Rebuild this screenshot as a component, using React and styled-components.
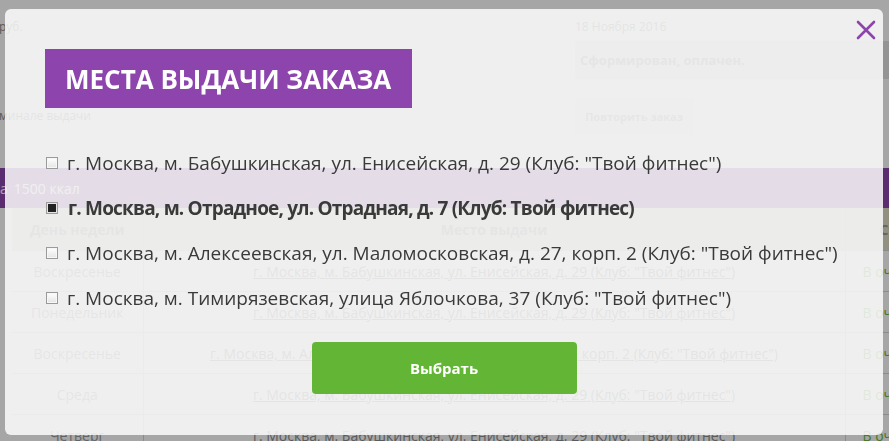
import React, { useState } from "react";
import styled, { createGlobalStyle } from "styled-components";

const GlobalStyle = createGlobalStyle`
  html, body {
    margin: 0;
    padding: 0;
    background: #ffffff;
    overflow: hidden;
  }
  body {
    font-family: "Open Sans", "Liberation Sans", sans-serif;
  }
`;

/* ---------- page behind the modal ---------- */

const Page = styled.div`
  width: 889px;
  height: 441px;
  overflow: hidden;
  color: #8a8a8a;
  font-size: 12px;
`;

const TopArea = styled.div`
  display: grid;
  grid-template-columns: 575px 330px;
  padding-top: 18px;
`;

const LeftInfo = styled.div`
  display: flex;
  flex-direction: column;
  gap: 71px;
  margin-left: -1px;
  line-height: 18px;
`;

const RightInfo = styled.div`
  display: flex;
  flex-direction: column;
`;

const DateLine = styled.div`
  line-height: 18px;
  height: 23px;
`;

const StatusBox = styled.div`
  height: 38px;
  background: #e4e4e4;
  display: flex;
  align-items: center;
  padding-left: 5px;
  font-weight: 700;
  font-size: 13px;
  color: #9a9a9a;
`;

const RepeatButton = styled.div`
  margin-top: 19px;
  width: 118px;
  height: 37px;
  background: #f2f2f2;
  display: flex;
  align-items: center;
  justify-content: center;
  font-weight: 700;
  font-size: 11px;
  color: #a3a3a3;
`;

const Band = styled.div`
  margin-top: 33px;
  height: 40px;
  background: #8e44ad;
  color: #ffffff;
  display: flex;
  align-items: center;
  gap: 6px;
  font-size: 14px;
`;

const Table = styled.table`
  margin-left: 12px;
  border-collapse: collapse;
  width: 1000px;
  table-layout: fixed;
`;

const Th = styled.th`
  height: 42px;
  padding: 0;
  background: #e0dfc6;
  color: #9a9a9a;
  font-weight: 700;
  font-size: 14px;
  text-align: ${(p) => (p.$left ? "left" : "center")};
  padding-left: ${(p) => (p.$left ? "34px" : "0")};
  border-left: 1px solid #d8d8d8;
  &:first-child { border-left: none; }
`;

const Td = styled.td`
  height: 40px;
  padding: 0;
  text-align: ${(p) => (p.$left ? "left" : "center")};
  padding-left: ${(p) => (p.$left ? "17px" : "0")};
  font-size: 14px;
  color: ${(p) => (p.$green ? "#6ab83c" : "#9a9a9a")};
  border-top: 1px solid #d6d6d6;
  border-left: 1px solid #d6d6d6;
  white-space: nowrap;
  overflow: hidden;
  &:first-child { border-left: none; }
`;

const PlaceLink = styled.span`
  text-decoration: underline;
  color: #8c8c8c;
`;

/* ---------- overlay + modal ---------- */

const Backdrop = styled.div`
  position: fixed;
  inset: 0;
  background: rgba(0, 0, 0, 0.35);
`;

const Modal = styled.div`
  position: fixed;
  left: 5px;
  top: 9px;
  width: 878px;
  height: 426px;
  box-sizing: border-box;
  padding: 40px;
  border-radius: 6px;
  background: rgba(251, 251, 251, 0.85);
  display: flex;
  flex-direction: column;
`;

const CloseButton = styled.button`
  position: absolute;
  top: 11px;
  right: 7px;
  width: 20px;
  height: 20px;
  padding: 0;
  border: none;
  background: transparent;
  cursor: pointer;
  display: flex;
  align-items: center;
  justify-content: center;
`;

const Title = styled.h2`
  align-self: flex-start;
  margin: 0;
  height: 59px;
  padding: 0 21px 0 20px;
  display: flex;
  align-items: center;
  background: #8e44ad;
  color: #ffffff;
  font-size: 26px;
  font-weight: 700;
  text-transform: uppercase;
`;

const OptionList = styled.div`
  margin-top: 32px;
  display: flex;
  flex-direction: column;
`;

const Option = styled.label`
  height: 45px;
  display: flex;
  align-items: center;
  gap: 9px;
  font-size: 19px;
  color: #3a3a3a;
  font-weight: ${(p) => (p.$active ? 700 : 400)};
  letter-spacing: ${(p) => (p.$active ? "-0.8px" : "0")};
  cursor: pointer;
  white-space: nowrap;
`;

const Box = styled.span`
  width: 12px;
  height: 12px;
  flex: none;
  margin-left: 1px;
  margin-right: ${(p) => (p.$checked ? "1px" : "0")};
  box-sizing: border-box;
  border: 1px solid #9a9a9a;
  background: ${(p) => (p.$checked ? "#222222" : "linear-gradient(#ffffff, #e4e4e4)")};
  box-shadow: ${(p) => (p.$checked ? "inset 0 0 0 1px #e5e5e5" : "inset 0 0 0 1px #f7f7f7")};
`;

const SubmitButton = styled.button`
  align-self: center;
  margin-top: 22px;
  width: 265px;
  height: 52px;
  border: none;
  border-radius: 4px;
  background: #63b536;
  color: #ffffff;
  font-family: "Open Sans", "Liberation Sans", sans-serif;
  font-size: 15px;
  font-weight: 700;
  cursor: pointer;
`;

const places = [
  'г. Москва, м. Бабушкинская, ул. Енисейская, д. 29 (Клуб: "Твой фитнес")',
  "г. Москва, м. Отрадное, ул. Отрадная, д. 7 (Клуб: Твой фитнес)",
  'г. Москва, м. Алексеевская, ул. Маломосковская, д. 27, корп. 2 (Клуб: "Твой фитнес")',
  'г. Москва, м. Тимирязевская, улица Яблочкова, 37 (Клуб: "Твой фитнес")',
];

const rows = [
  ["Воскресенье", places[0]],
  ["Понедельник", places[0]],
  ["Воскресенье", places[2]],
  ["Среда", places[0]],
  ["Четверг", places[0]],
];

export default function App() {
  const [selected, setSelected] = useState(1);

  return (
    <>
      <GlobalStyle />
      <Page>
        <TopArea>
          <LeftInfo>
            <span>руб.</span>
            <span>минале выдачи</span>
          </LeftInfo>
          <RightInfo>
            <DateLine>18 Ноября 2016</DateLine>
            <StatusBox>Сформирован, оплачен.</StatusBox>
            <RepeatButton>Повторить заказ</RepeatButton>
          </RightInfo>
        </TopArea>
        <Band>
          <span>а</span>
          <span>1500 ккал</span>
        </Band>
        <Table>
          <colgroup>
            <col style={{ width: 131 }} />
            <col style={{ width: 702 }} />
            <col />
          </colgroup>
          <thead>
            <tr>
              <Th>День недели</Th>
              <Th>Место выдачи</Th>
              <Th $left>Статус</Th>
            </tr>
          </thead>
          <tbody>
            {rows.map(([day, place], idx) => (
              <tr key={idx}>
                <Td>{day}</Td>
                <Td>
                  <PlaceLink>{place}</PlaceLink>
                </Td>
                <Td $left $green>
                  В очереди
                </Td>
              </tr>
            ))}
          </tbody>
        </Table>
      </Page>

      <Backdrop />
      <Modal>
        <CloseButton aria-label="Закрыть">
          <svg width="20" height="20" viewBox="0 0 20 20">
            <path
              d="M2 2 L18 18 M18 2 L2 18"
              stroke="#8e44ad"
              strokeWidth="2.6"
              strokeLinecap="round"
            />
          </svg>
        </CloseButton>
        <Title>Места выдачи заказа</Title>
        <OptionList>
          {places.map((p, idx) => (
            <Option
              key={idx}
              $active={selected === idx}
              onClick={() => setSelected(idx)}
            >
              <Box $checked={selected === idx} />
              {p}
            </Option>
          ))}
        </OptionList>
        <SubmitButton>Выбрать</SubmitButton>
      </Modal>
    </>
  );
}
